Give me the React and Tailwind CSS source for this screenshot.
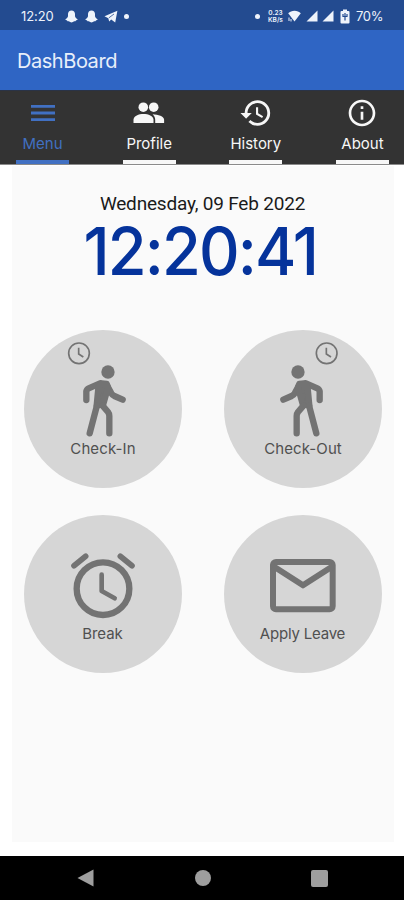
import React from "react";
import { MdHistory, MdInfoOutline } from "react-icons/md";

const tabs = [
  { label: "Menu", icon: "menu", active: true },
  { label: "Profile", icon: "profile" },
  { label: "History", icon: "history" },
  { label: "About", icon: "about" },
];

const actions = [
  { label: "Check-In", art: "in", spacing: "tracking-[0.1px]" },
  { label: "Check-Out", art: "out", spacing: "tracking-[0.1px]" },
  { label: "Break", art: "break", spacing: "tracking-[-0.1px] pr-[1px]" },
  { label: "Apply Leave", art: "mail", spacing: "tracking-[-0.2px] pr-[1px]" },
];

const Ghost = () => (
  <svg width="13" height="13" viewBox="0 0 13 13" fill="currentColor">
    <path d="M6.500.400c2.200 0 3.500 1.600 3.500 3.600v2.200c.400 1.500 1.300 2.400 2.700 3-.200.800-1.200 1-1.800 1.200-.300.900-1 .800-1.900.800-.800.500-1.500 1.200-2.500 1.200S4.800 11.700 4 11.200c-.900 0-1.600.100-1.900-.800C1.500 10.200.500 10 .300 9.200c1.400-.600 2.300-1.500 2.700-3V4C3 2 4.300.400 6.500.400z" />
  </svg>
);

const Signal = () => (
  <svg width="12" height="12" viewBox="0 0 12 12" fill="currentColor">
    <path d="M11.500.500v11H.500z" />
  </svg>
);

const StatusBar = () => (
  <div className="flex h-[30px] items-center justify-between bg-[#234b90] pl-[21px] pr-[20px] pt-[2px] text-[#eef3fb]">
    <div className="flex items-center">
      <span className="w-[44px] text-[13px] leading-none tracking-[-0.1px]">12:20</span>
      <Ghost />
      <span className="w-[7px]" />
      <Ghost />
      <svg className="ml-[6px]" width="14" height="13" viewBox="0 0 14 13" fill="currentColor">
        <path d="M.500 6.300 13.400.700 11.200 12.400 7.200 9.400 5.200 11.400 4.300 8.300z" />
        <path d="M4.800 7.900 10 4" stroke="#234b90" strokeWidth=".8" />
      </svg>
      <span className="ml-[6px] size-[5px] rounded-full bg-current" />
    </div>
    <div className="flex items-center">
      <span className="size-[5px] rounded-full bg-current" />
      <span className="ml-[7px] flex w-[17px] flex-col items-center text-[6.500px] font-semibold leading-[8px]">
        <span>0.23</span>
        <span className="-mt-px">KB/s</span>
      </span>
      <svg className="ml-[4px]" width="13" height="12" viewBox="0 0 13 12" fill="currentColor">
        <path d="M6.500.800C9 .800 11.200 1.800 12.800 3.300L6.500 11.500.200 3.300C1.800 1.800 4 .800 6.500.800z" />
        <path d="M1 7.500v3.500M3 9v2.500" stroke="currentColor" strokeWidth="1" />
      </svg>
      <span className="w-[5px]" />
      <Signal />
      <span className="w-[4px]" />
      <Signal />
      <svg className="ml-[6px]" width="10" height="15" viewBox="0 0 10 15" fill="currentColor">
        <path d="M3 .500h4V2h1.500a1 1 0 0 1 1 1v10.500a1 1 0 0 1-1 1h-7a1 1 0 0 1-1-1V3a1 1 0 0 1 1-1H3z" />
        <path d="M3 5v2.500h4V5M5 4v7.500" fill="none" stroke="#234b90" strokeWidth="1.200" />
      </svg>
      <span className="ml-[6px] w-[28px] whitespace-nowrap text-[13px] leading-none tracking-[-0.3px]">70%</span>
    </div>
  </div>
);

const TabIcon = ({ name }) => {
  if (name === "menu") {
    return (
      <svg width="24" height="18" viewBox="0 0 24 18" stroke="currentColor" strokeWidth="2.800">
        <path d="M0 2.400h24M0 9h24M0 15.600h24" />
      </svg>
    );
  }
  if (name === "profile") {
    return (
      <svg width="32" height="22" viewBox="0 0 32 22" fill="currentColor">
        <circle cx="20.700" cy="5.200" r="4.800" />
        <circle cx="10.300" cy="5.200" r="5.500" fill="#333333" />
        <circle cx="10.300" cy="5.200" r="4.800" />
        <path d="M.500 21v-3.200c0-3.700 5.300-5.700 10-5.700s10 2 10 5.700V21z" />
        <path d="M19.600 12.200c5.600.200 11.500 2 11.500 5.600V21h-8.900v-3.200c0-2.300-1-4.200-2.600-5.600z" />
      </svg>
    );
  }
  if (name === "history") return <MdHistory size={34} />;
  return <MdInfoOutline size={32} />;
};

const TabBar = () => (
  <nav className="flex h-[75px] justify-between border-b border-t border-b-[#8a8a8a] border-t-[#2a3346] bg-[#333333] pl-[16px] pr-[15px]">
    {tabs.map((tab) => (
      <div
        key={tab.label}
        className={`flex w-[53px] flex-col items-center ${tab.active ? "text-[#4170c2]" : "text-[#f7f7f7]"}`}
      >
        <div className="flex h-[44px] items-center justify-center">
          <TabIcon name={tab.icon} />
        </div>
        <span className="h-[25px] pt-[1px] text-[15px] leading-[16px]">{tab.label}</span>
        <span className="h-[4px] w-full bg-current" />
      </div>
    ))}
  </nav>
);

const Walker = () => (
  <g stroke="currentColor" strokeWidth="19" strokeLinecap="round" strokeLinejoin="round" fill="none">
    <circle cx="294" cy="156" r="20" fill="currentColor" stroke="none" />
    <path d="M229 240v-26q1-6 7-9l34-15" />
    <path d="M292 198l12 22q3 5 9 8l25 11" />
    <path d="M275 190l15 2 4 10-14 50-20 5 5-52z" fill="currentColor" />
    <path d="M261 256l-22 84" />
    <path d="M277 256l17 20q4 5 4 12v52" />
  </g>
);

const SmallClock = ({ cx }) => (
  <g stroke="currentColor" strokeWidth="5" fill="none">
    <circle cx={cx} cy="100" r="31" />
    <path d={`M${cx - 1} 83v19l14 9`} />
  </g>
);

const ActionArt = ({ name }) => (
  <svg width="158" height="108" viewBox="42 30 474 324">
    {name === "in" && (
      <>
        <SmallClock cx={207} />
        <Walker />
      </>
    )}
    {name === "out" && (
      <>
        <SmallClock cx={350} />
        <g transform="translate(558 0) scale(-1 1)">
          <Walker />
        </g>
      </>
    )}
    {name === "break" && (
      <g stroke="currentColor" fill="none" strokeLinecap="round" strokeLinejoin="round">
        <circle cx="279" cy="251" r="79" strokeWidth="19" />
        <path d="M192 182l35-28M331 154l35 28" strokeWidth="17" />
        <path d="M275 209v49l39 22" strokeWidth="14" />
      </g>
    )}
    {name === "mail" && (
      <g stroke="currentColor" fill="none" strokeWidth="18" strokeLinejoin="round">
        <rect x="189" y="171" width="179" height="142" rx="9" />
        <path d="M190 184l89 57 89-57" />
      </g>
    )}
  </svg>
);

const App = () => {
  return (
    <div className="flex h-[900px] w-[404px] flex-col overflow-hidden bg-white font-['Inter',sans-serif]">
      <StatusBar />

      <header className="flex h-[60px] items-center bg-[#2f65c4] pl-[17px] pt-[2px] text-[20px] tracking-[-0.45px] text-[#e8effa]">
        DashBoard
      </header>

      <TabBar />

      <main className="ml-[12px] mt-px flex h-[676px] w-[382px] flex-col bg-[#fafafa]">
        {/* Date and clock */}
        <div className="flex flex-col items-center pt-[26px]">
          <p className="whitespace-nowrap pr-[1px] font-['Roboto',sans-serif] text-[19px] leading-[24px] tracking-[-0.2px] text-[#1a1a1a]">
            Wednesday, 09 Feb 2022
          </p>
          <p className="mt-[5px] scale-x-[0.955] whitespace-nowrap pr-[5px] text-[66px] font-medium leading-[60px] tracking-[-2px] text-[#05339b]">
            12:20:41
          </p>
        </div>

        {/* Attendance actions */}
        <div className="mt-[49px] grid grid-cols-[158px_158px] gap-x-[42px] gap-y-[26.5px] pl-[12px]">
          {actions.map((action) => (
            <button
              key={action.label}
              className="flex h-[158px] w-[158px] flex-col items-center rounded-full bg-[#d6d6d6] text-[#737373]"
            >
              <ActionArt name={action.art} />
              <span className={`text-[15px] leading-[22px] text-[#505050] ${action.spacing}`}>{action.label}</span>
            </button>
          ))}
        </div>
      </main>

      {/* System navigation */}
      <div className="mt-auto flex h-[44px] items-center justify-between bg-black pl-[77px] pr-[76px] text-[#9e9e9e]">
        <svg width="17" height="18" viewBox="0 0 17 18" fill="currentColor">
          <path d="M16.500.500v17L.500 9z" />
        </svg>
        <span className="size-[16px] rounded-full bg-current" />
        <span className="size-[17px] rounded-[2px] bg-current" />
      </div>
    </div>
  );
};

export default App;
